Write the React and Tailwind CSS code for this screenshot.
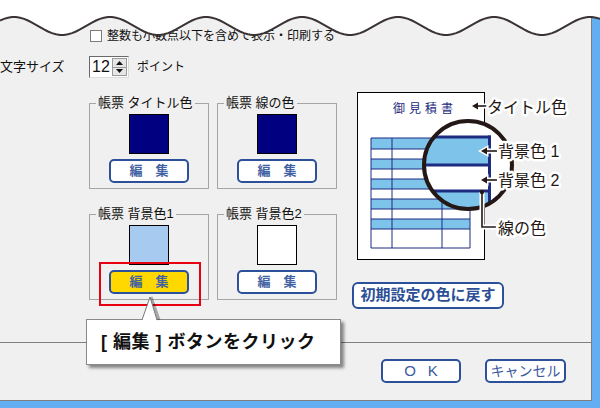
import React from "react";

// 破れた紙のような波線（上端）
const WAVE = (() => {
  let d = "";
  for (let x = 0; x <= 600; x += 4) {
    const y = 26 - 9 * Math.cos((2 * Math.PI * (x - 110)) / 96);
    d += (x === 0 ? "M" : "L") + x + "," + y.toFixed(2) + " ";
  }
  return d;
})();

const ROWS = [138, 149, 159, 169, 179, 189, 199, 209, 219, 229, 248];
const NAVY = "#1d2b80";
const LIGHT = "#7ec4ea";

const EditButton = ({ yellow }) => (
  <button
    className={
      "mt-[5px] w-[80px] h-[24px] rounded-[5px] border-2 border-[#2d509a] flex items-center justify-center gap-[13px] text-[13px] font-bold text-[#4262a2] " +
      (yellow ? "bg-[#ffd800]" : "bg-white")
    }
  >
    <span>編</span>
    <span>集</span>
  </button>
);

const ColorBox = ({ label, swatch, yellow }) => (
  <fieldset className="border border-[#a5a5a5] min-w-0">
    <legend className="ml-[6px] px-[2px] text-[13px] leading-[14px] whitespace-nowrap">
      {label}
    </legend>
    <div className="flex flex-col items-center pb-[5px]">
      <div className={"mt-[4px] w-[40px] h-[40px] border border-black " + swatch} />
      <EditButton yellow={yellow} />
    </div>
  </fieldset>
);

const Label = ({ x, y, children }) => (
  <text
    x={x}
    y={y}
    fontSize="16"
    fill="#231815"
    stroke="#ffffff"
    strokeWidth="5"
    strokeLinejoin="round"
    paintOrder="stroke"
  >
    {children}
  </text>
);

const Arrow = ({ x1, x2, y }) => (
  <g>
    <path d={`M${x1 + 3},${y} L${x2},${y}`} stroke="#fff" strokeWidth="5" />
    <path d={`M${x1},${y} L${x1 + 6},${y - 3.5} L${x1 + 6},${y + 3.5} Z`} fill="#fff" stroke="#fff" strokeWidth="3" />
    <path d={`M${x1 + 3},${y} L${x2},${y}`} stroke="#231815" strokeWidth="1.6" />
    <path d={`M${x1},${y} L${x1 + 6},${y - 3.5} L${x1 + 6},${y + 3.5} Z`} fill="#231815" />
  </g>
);

const Preview = () => (
  <svg className="ml-[5px] block w-[231px] h-[170px]" viewBox="357 92 231 170">
    <defs>
      <clipPath id="lens">
        <circle cx="468" cy="165" r="44" />
      </clipPath>
    </defs>
    <rect x="357.5" y="92.5" width="127" height="167" fill="#fff" stroke="#000" />
    <text x="425" y="113" fontSize="12" letterSpacing="4" textAnchor="middle" fill={NAVY}>
      御見積書
    </text>
    {ROWS.slice(0, -1).map((y, i) =>
      i % 2 === 0 ? (
        <rect key={y} x="371" y={y} width="99" height={ROWS[i + 1] - y} fill={LIGHT} />
      ) : null
    )}
    {ROWS.map((y) => (
      <line key={y} x1="371" x2="470" y1={y} y2={y} stroke={NAVY} strokeWidth="1" />
    ))}
    {[371, 392, 442, 470].map((x) => (
      <line key={x} x1={x} x2={x} y1="138" y2="248" stroke={NAVY} strokeWidth="1" />
    ))}

    {/* 拡大鏡 */}
    <g clipPath="url(#lens)">
      <rect x="420" y="118" width="100" height="100" fill="#fff" />
      <rect x="420" y="137" width="69" height="28" fill={LIGHT} />
      <rect x="420" y="191" width="69" height="26" fill={LIGHT} />
      <line x1="420" x2="491" y1="137" y2="137" stroke={NAVY} strokeWidth="3" />
      <line x1="420" x2="491" y1="165" y2="165" stroke={NAVY} strokeWidth="3" />
      <line x1="420" x2="491" y1="191" y2="191" stroke={NAVY} strokeWidth="3" />
      <line x1="489.5" x2="489.5" y1="135.5" y2="220" stroke={NAVY} strokeWidth="3" />
    </g>
    <circle cx="468" cy="165" r="44" fill="none" stroke="#231815" strokeWidth="4" />

    <Arrow x1={472} x2={487} y={106} />
    <Label x={487} y={113}>タイトル色</Label>
    <Arrow x1={481} x2={497} y={151} />
    <Label x={498} y={157}>背景色 1</Label>
    <Arrow x1={481} x2={497} y={180} />
    <Label x={498} y={186}>背景色 2</Label>

    <path d="M482,192 L482,227 L496,227" fill="none" stroke="#fff" strokeWidth="5" />
    <path d="M482,192 L482,227 L496,227" fill="none" stroke="#231815" strokeWidth="1.6" />
    <circle cx="482" cy="192" r="2.2" fill="#231815" />
    <Label x={498} y={234}>線の色</Label>
  </svg>
);

const Spin = () => (
  <div className="w-[40px] h-[22px] flex bg-white border border-t-[#6a6a6a] border-l-[#6a6a6a] border-r-[#dcdcdc] border-b-[#dcdcdc]">
    <span className="flex-1 pl-[2px] text-[16px] leading-[20px] font-['Liberation_Sans',sans-serif]">12</span>
    <div className="w-[16px] flex flex-col py-[1px] pr-[1px]">
      <div className="flex-1 bg-[#e6e6e6] border border-[#9a9a9a] flex items-center justify-center">
        <svg width="7" height="4" viewBox="0 0 7 4"><path d="M3.5,0 L7,4 L0,4 Z" fill="#111" /></svg>
      </div>
      <div className="flex-1 bg-[#e6e6e6] border border-[#9a9a9a] border-t-0 flex items-center justify-center">
        <svg width="7" height="4" viewBox="0 0 7 4"><path d="M0,0 L7,0 L3.5,4 Z" fill="#111" /></svg>
      </div>
    </div>
  </div>
);

export default function App() {
  return (
    <div className="relative w-[600px] h-[408px] overflow-hidden bg-[#63adf2] text-[#111] font-['Liberation_Sans','Noto_Sans_CJK_JP',sans-serif]">
      <div className="w-[592px] h-[401px] bg-[#f0f0f0] border-r border-b border-[#7d7d7d] flex flex-col">
        {/* チェックボックス */}
        <div className="mt-[30px] ml-[90px] h-[12px] flex items-center">
          <div className="w-[12px] h-[12px] bg-white border border-[#7b7b7b]" />
          <span className="ml-[5px] text-[12px] leading-none whitespace-nowrap">
            整数も小数点以下を含めて表示・印刷する
          </span>
        </div>

        {/* 文字サイズ */}
        <div className="mt-[14px] h-[22px] flex items-center">
          <span className="w-[89px] text-[13px] whitespace-nowrap">文字サイズ</span>
          <Spin />
          <span className="ml-[8px] text-[12px]">ポイント</span>
        </div>

        {/* 色設定 */}
        <div className="mt-[14px] h-[217px] flex">
          <div className="ml-[89px] mt-[4px] grid grid-cols-[120px_120px] gap-x-[8px] gap-y-[18px] content-start">
            <ColorBox label="帳票 タイトル色" swatch="bg-[#000080]" />
            <ColorBox label="帳票 線の色" swatch="bg-[#000080]" />
            <ColorBox label="帳票 背景色1" swatch="bg-[#a6caf0]" yellow />
            <ColorBox label="帳票 背景色2" swatch="bg-white" />
          </div>
          <div className="ml-[15px] flex flex-col">
            <Preview />
            <button className="mt-[20px] w-[152px] h-[27px] rounded-[6px] border-2 border-[#2d509a] bg-white text-[15px] font-bold text-[#2c4e96] flex items-center justify-center">
              初期設定の色に戻す
            </button>
          </div>
        </div>

        {/* 区切り線 */}
        <div className="mt-[33px] h-[1px] bg-[#808080]" />

        {/* OK / キャンセル */}
        <div className="mt-[16px] ml-[381px] flex gap-[24px]">
          <button className="w-[80px] h-[24px] rounded-[5px] border-2 border-[#2d509a] bg-white text-[15px] text-[#3b5ba0] flex items-center justify-center gap-[12px] font-['Liberation_Sans',sans-serif]">
            <span>O</span>
            <span>K</span>
          </button>
          <button className="w-[81px] h-[24px] rounded-[5px] border-2 border-[#2d509a] bg-white text-[14px] text-[#3b5ba0] flex items-center justify-center">
            キャンセル
          </button>
        </div>
      </div>

      {/* 上端の波線 */}
      <svg className="absolute left-0 top-0 w-[600px] h-[40px]" viewBox="0 0 600 40">
        <path d={WAVE + "L600,0 L0,0 Z"} fill="#fff" />
        <path d={WAVE} fill="none" stroke="#3b3333" strokeWidth="2" />
      </svg>

      {/* 赤枠 */}
      <div className="absolute left-[99px] top-[262px] w-[102px] h-[44px] border-2 border-[#e60012]" />

      {/* 吹き出し */}
      <div className="absolute left-[86px] top-[319px] w-[255px] h-[46px] bg-white border border-[#8a8a8a] shadow-[3px_3px_3px_rgba(0,0,0,0.45)] flex items-center pl-[14px]">
        <span className="text-[18px] font-bold whitespace-nowrap tracking-[0.5px]">[ 編集 ] ボタンをクリック</span>
      </div>
      <svg className="absolute left-[140px] top-[296px] w-[22px] h-[26px]" viewBox="0 0 22 26">
        <path d="M11,1 L19,24" stroke="rgba(0,0,0,0.3)" strokeWidth="3" />
        <path d="M10,1 L2,25 L17,25 Z" fill="#fff" />
        <path d="M2,24 L10,1 L17,24" fill="none" stroke="#7a7a7a" strokeWidth="1" />
      </svg>
    </div>
  );
}
